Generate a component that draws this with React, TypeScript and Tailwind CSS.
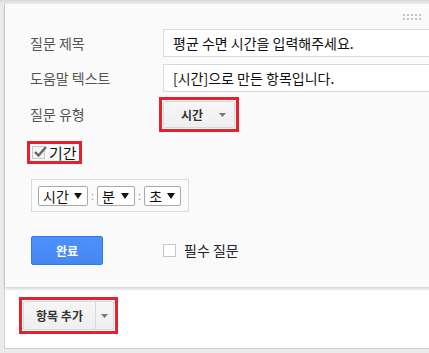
const font = { fontFamily: '"Noto Sans CJK KR", "Liberation Sans", sans-serif' }

function RedMark() {
  return <span className="pointer-events-none absolute -inset-[4px] border-[3px] border-[#e8202a]" />
}

function GrayArrow() {
  return (
    <svg width="7" height="4" viewBox="0 0 7 4" className="block">
      <path d="M0 0h7L3.5 4z" fill="#777" />
    </svg>
  )
}

function BlackArrow() {
  return (
    <svg width="8" height="6" viewBox="0 0 8 6" className="block">
      <path d="M0 0h8L4 6z" fill="#111" />
    </svg>
  )
}

function TimeSelect({ label, width }: { label: string; width: string }) {
  return (
    <div className={`flex h-[20px] items-center justify-between rounded-[2px] border border-[#a9a9a9] bg-white pl-[4px] pr-[5px] ${width}`}>
      <span className="text-[14px] leading-none text-[#111]">{label}</span>
      <BlackArrow />
    </div>
  )
}

function Colon() {
  return <span className="mx-[3px] text-[11px] leading-none text-[#9aa]">:</span>
}

export default function App() {
  return (
    <div className="flex h-[353px] w-[429px] flex-col overflow-hidden bg-[#ebebeb]" style={font}>
      <div className="h-[4px] shrink-0 bg-gradient-to-b from-[#d8d8d8] to-[#ededed]" />
      <div className="ml-[4px] flex w-[480px] flex-col border-l border-[#d2d2d2]">
        {/* question card */}
        <div className="relative h-[283px] bg-[#fafafa] pl-[25px] pt-[25px] shadow-[0_2px_3px_rgba(0,0,0,0.18)]">
          <div className="absolute left-[398px] top-[10px] grid grid-cols-5 gap-[2px]">
            {Array.from({ length: 10 }).map((_, i) => (
              <span key={i} className="h-[2px] w-[2px] bg-[#c2c2c2]" />
            ))}
          </div>

          <div className="flex items-center">
            <div className="w-[133px] text-[14px] text-[#555]">질문 제목</div>
            <div className="flex h-[28px] flex-1 items-center border border-[#d9d9d9] bg-white pl-[9px] text-[14px] text-[#111]">
              평균 수면 시간을 입력해주세요.
            </div>
          </div>

          <div className="mt-[7px] flex items-center">
            <div className="w-[133px] text-[14px] text-[#555]">도움말 텍스트</div>
            <div className="flex h-[28px] flex-1 items-center border border-[#d9d9d9] bg-white pl-[9px] text-[14px] text-[#111]">
              [시간]으로 만든 항목입니다.
            </div>
          </div>

          <div className="mt-[9px] flex items-center">
            <div className="w-[133px] text-[14px] text-[#555]">질문 유형</div>
            <div className="relative">
              <div className="flex h-[27px] w-[72px] items-center rounded-[2px] border border-[#d8d8d8] bg-gradient-to-b from-[#f6f6f6] to-[#efefef] pl-[17px] pr-[8px]">
                <span className="flex-1 text-[12px] font-bold text-[#333]">시간</span>
                <GrayArrow />
              </div>
              <RedMark />
            </div>
          </div>

          <div className="mt-[16px] flex">
            <div className="relative ml-[2px] flex h-[17px] items-center gap-[4px]">
              <span className="relative h-[13px] w-[13px] border border-[#c8c8c8] bg-[#f4f4f4]">
                <svg width="15" height="13" viewBox="0 0 15 13" className="absolute -top-[2px] left-0">
                  <path d="M2 7l3.5 3.5L13 2" fill="none" stroke="#666" strokeWidth="2.4" />
                </svg>
              </span>
              <span className="text-[15px] leading-none text-[#111]">기간</span>
              <span className="pointer-events-none absolute -bottom-[3px] -left-[5px] -right-[5px] -top-[3px] border-[3px] border-[#e8202a]" />
            </div>
          </div>

          <div className="ml-[1px] mt-[18px] flex">
            <div className="flex h-[33px] w-[158px] items-center border border-[#d9d9d9] pl-[6px]">
              <TimeSelect label="시간" width="w-[50px]" />
              <Colon />
              <TimeSelect label="분" width="w-[38px]" />
              <Colon />
              <TimeSelect label="초" width="w-[37px]" />
            </div>
          </div>

          <div className="ml-[1px] mt-[24px] flex items-center">
            <div className="flex h-[29px] w-[72px] items-center justify-center rounded-[2px] border border-[#3079ed] bg-gradient-to-b from-[#4d90fe] to-[#4787ed] text-[12px] font-bold text-white">
              완료
            </div>
            <div className="ml-[60px] flex items-center">
              <span className="h-[13px] w-[13px] border border-[#c6c6c6] bg-white" />
              <span className="ml-[8px] text-[14px] text-[#222]">필수 질문</span>
            </div>
          </div>
        </div>

        {/* add item */}
        <div className="h-[62px] border-b border-[#cfcfcf] bg-white pl-[18px] pt-[14px]">
          <div className="relative inline-flex">
            <div className="flex h-[29px] w-[91px] items-stretch rounded-[2px] border border-[#d8d8d8] bg-gradient-to-b from-[#f6f6f6] to-[#efefef]">
              <span className="flex w-[71px] items-center justify-center text-[12px] font-bold text-[#333]">항목 추가</span>
              <span className="w-px bg-[#d8d8d8]" />
              <span className="flex flex-1 items-center justify-center">
                <GrayArrow />
              </span>
            </div>
            <RedMark />
          </div>
        </div>
      </div>
    </div>
  )
}
